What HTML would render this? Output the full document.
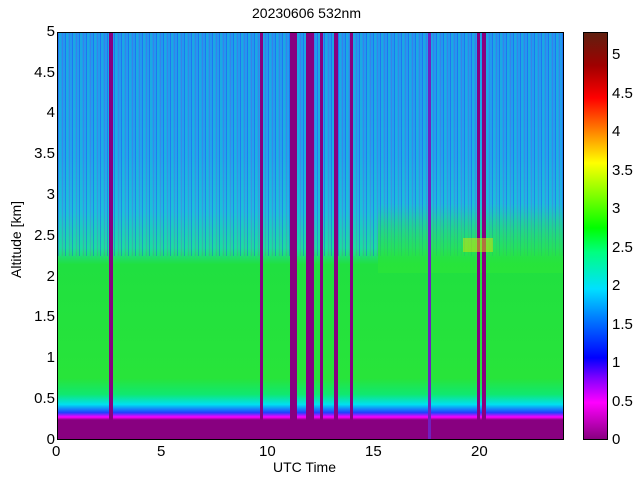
<!DOCTYPE html>
<html><head><style>
body{margin:0;width:640px;height:480px;background:#fff;position:relative;overflow:hidden;font-family:"Liberation Sans",sans-serif;color:#000}
.a{position:absolute}
#plot{left:57px;top:32px;width:507px;height:408px;border:1px solid #000;box-sizing:border-box;overflow:hidden;
background:linear-gradient(to bottom,#2098ee 0%,#20a4ec 30%,#20b8e0 44%,#20d8a0 53%,#20e040 57%,#28e43a 85%,#10e870 89%,#00e0f0 91.5%,#2040ff 93.5%,#ff00ff 94.6%,#880080 95.3%,#880080 100%)}
.s{position:absolute;top:0;bottom:0;background:#880080}
.t{position:absolute;font-size:15px}
.yt{right:585px;text-align:right}
#cb{left:583px;top:32px;width:25px;height:408px;border:1px solid #000;box-sizing:border-box;
background:linear-gradient(to top,#880080 0%,#ff00ff 9%,#8000ff 15%,#0000ff 20%,#0080ff 30%,#00e0ff 37%,#00ff80 46%,#00ff00 52%,#80ff00 60%,#ffff00 68%,#ff8000 76%,#ff0000 84%,#a00000 92%,#602010 100%)}
</style></head><body>
<div class="t" style="left:252px;top:5px;font-size:14px">20230606 532nm</div>
<div id="plot" class="a">
 <div class="a" style="left:0;right:0;top:0;height:55%;background:repeating-linear-gradient(90deg,rgba(30,30,255,.3) 0 1px,rgba(0,255,160,.15) 1px 3px,rgba(0,0,0,0) 3px 4px,rgba(180,0,200,.15) 4px 5px,rgba(0,0,0,0) 5px 7px)"></div>
 <div class="a" style="left:320px;right:0;top:170px;height:70px;background:linear-gradient(to bottom,rgba(32,224,64,0),rgba(40,228,58,1))"></div>
 <div class="s" style="left:51px;width:4px"></div>
 <div class="s" style="left:202px;width:3px"></div>
 <div class="s" style="left:232px;width:7px"></div>
 <div class="s" style="left:248px;width:8px"></div>
 <div class="s" style="left:262px;width:3px"></div>
 <div class="s" style="left:276px;width:4px"></div>
 <div class="s" style="left:292px;width:3px"></div>
 <div class="s" style="left:370px;width:3px;background:#7020c0"></div>
 <div class="s" style="left:419px;width:3px"></div>
 <div class="s" style="left:424px;width:4px"></div>
 <div class="a" style="left:405px;top:205px;width:30px;height:14px;background:rgba(220,230,0,.5)"></div>
</div>
<div class="t yt" style="top:23px">5</div>
<div class="t yt" style="top:64px">4.5</div>
<div class="t yt" style="top:104px">4</div>
<div class="t yt" style="top:145px">3.5</div>
<div class="t yt" style="top:186px">3</div>
<div class="t yt" style="top:227px">2.5</div>
<div class="t yt" style="top:268px">2</div>
<div class="t yt" style="top:308px">1.5</div>
<div class="t yt" style="top:349px">1</div>
<div class="t yt" style="top:390px">0.5</div>
<div class="t yt" style="top:431px">0</div>
<div class="t" style="left:8px;top:278px;transform:rotate(-90deg);transform-origin:0 0;font-size:14px;white-space:nowrap">Altitude [km]</div>
<div class="t" style="left:52px;top:443px">0</div>
<div class="t" style="left:157px;top:443px">5</div>
<div class="t" style="left:259px;top:443px">10</div>
<div class="t" style="left:365px;top:443px">15</div>
<div class="t" style="left:471px;top:443px">20</div>
<div class="t" style="left:273px;top:459px;font-size:14px">UTC Time</div>
<div id="cb" class="a"></div>
<div class="t" style="left:612px;top:431px">0</div>
<div class="t" style="left:612px;top:393px">0.5</div>
<div class="t" style="left:612px;top:354px">1</div>
<div class="t" style="left:612px;top:316px">1.5</div>
<div class="t" style="left:612px;top:277px">2</div>
<div class="t" style="left:612px;top:239px">2.5</div>
<div class="t" style="left:612px;top:200px">3</div>
<div class="t" style="left:612px;top:162px">3.5</div>
<div class="t" style="left:612px;top:123px">4</div>
<div class="t" style="left:612px;top:85px">4.5</div>
<div class="t" style="left:612px;top:46px">5</div>
</body></html>
